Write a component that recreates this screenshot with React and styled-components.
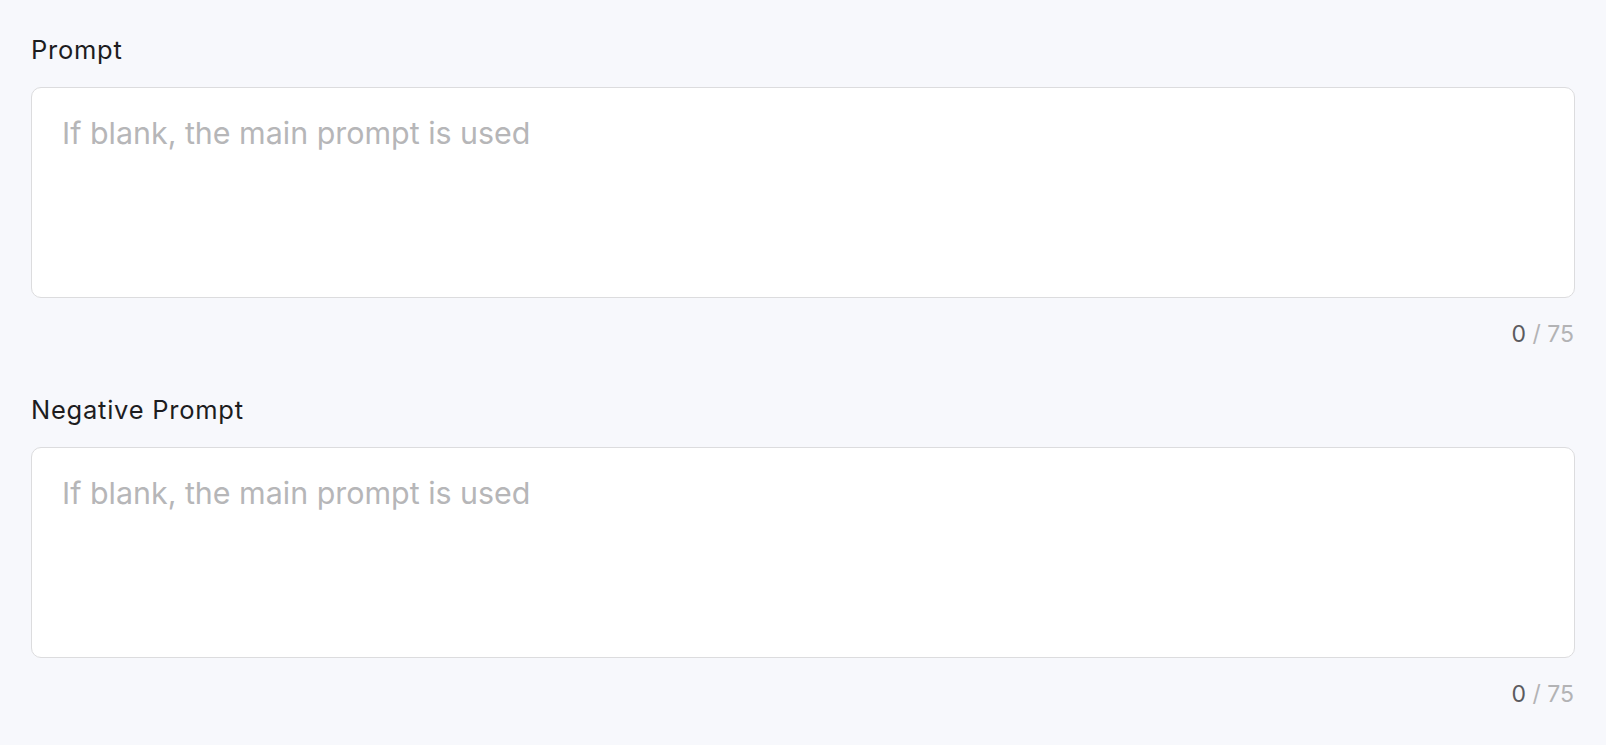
import React, { useState } from "react";
import styled, { createGlobalStyle } from "styled-components";

const Global = createGlobalStyle`
  html, body {
    margin: 0;
    padding: 0;
    background: #f7f8fc;
  }
  body {
    font-family: Inter, "Noto Sans", "Liberation Sans", sans-serif;
    -webkit-font-smoothing: antialiased;
  }
  * { box-sizing: border-box; }
`;

const Page = styled.div`
  min-height: 745px;
  padding: 35px 31px 0;
  display: flex;
  flex-direction: column;
  background: #f7f8fc;
`;

const Field = styled.div`
  display: flex;
  flex-direction: column;
  margin-bottom: ${(p) => (p.$last ? "0" : "47px")};
`;

const Label = styled.label`
  font-size: 25.5px;
  line-height: 30px;
  letter-spacing: 0.75px;
  color: #1d1d1f;
  margin-bottom: 22px;
`;

const TextArea = styled.textarea`
  display: block;
  width: 100%;
  height: 211px;
  resize: none;
  border: 1px solid #dcdcde;
  border-radius: 10px;
  background: #ffffff;
  padding: 23px 30px 21px;
  font-family: Inter, "Noto Sans", "Liberation Sans", sans-serif;
  font-size: 30.4px;
  line-height: 45px;
  color: #1d1d1f;
  outline: none;
  &::placeholder {
    color: #b6b6b8;
  }
`;

const Counter = styled.div`
  align-self: flex-end;
  margin-top: 22px;
  margin-right: 1px;
  font-size: 23px;
  line-height: 28px;
  color: #b3b3b5;
`;

const Count = styled.span`
  color: #5b5b5e;
`;

function PromptField({ label, last }) {
  const [value, setValue] = useState("");
  return (
    <Field $last={last}>
      <Label>{label}</Label>
      <TextArea
        value={value}
        maxLength={75}
        placeholder="If blank, the main prompt is used"
        onChange={(e) => setValue(e.target.value)}
      />
      <Counter>
        <Count>{value.length}</Count> / 75
      </Counter>
    </Field>
  );
}

export default function App() {
  return (
    <>
      <Global />
      <Page>
        <PromptField label="Prompt" />
        <PromptField label="Negative Prompt" last />
      </Page>
    </>
  );
}
